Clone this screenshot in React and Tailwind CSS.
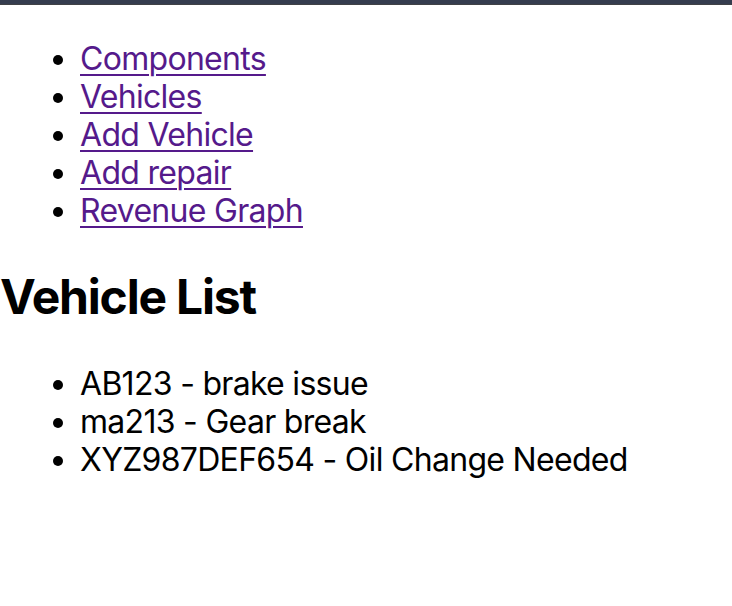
const links = ["Components", "Vehicles", "Add Vehicle", "Add repair", "Revenue Graph"];

const vehicles = [
  { plate: "AB123", issue: "brake issue" },
  { plate: "ma213", issue: "Gear break" },
  { plate: "XYZ987DEF654", issue: "Oil Change Needed" },
];

export default function App() {
  return (
    <div className="min-h-[606px] bg-white text-black font-['Inter','Liberation_Sans',sans-serif]">
      {/* barre du haut */}
      <div className="h-[4px] bg-[#353c4e]" />
      <div className="h-[1px] bg-[#404145]" />

      <ul className="list-disc pl-[80px] mt-[35px] text-[32px] leading-[38px] tracking-[-0.7px]">
        {links.map((l) => (
          <li key={l}>
            <a
              href="#"
              className="text-[#551a8b] underline decoration-[2px] underline-offset-[4px]"
            >
              {l}
            </a>
          </li>
        ))}
      </ul>

      <h2 className="mt-[38px] text-[48px] leading-[57px] font-bold tracking-[-1.2px]">Vehicle List</h2>

      <ul className="list-disc pl-[80px] mt-[40px] text-[32px] leading-[38px] tracking-[-0.7px]">
        {vehicles.map((v) => (
          <li key={v.plate}>
            {v.plate} - {v.issue}
          </li>
        ))}
      </ul>
    </div>
  );
}
